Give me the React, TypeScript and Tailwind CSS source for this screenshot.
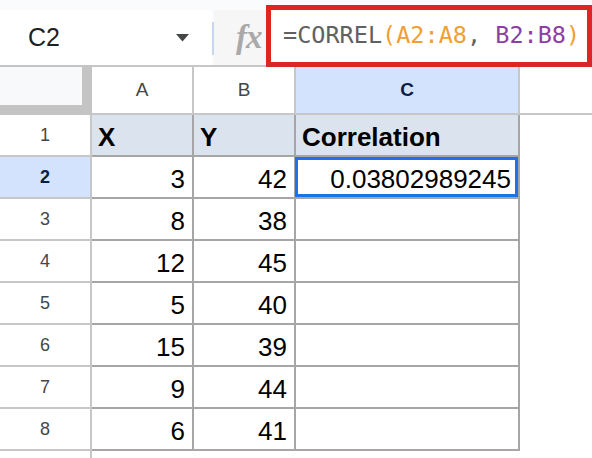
import React from "react";

type Row = { n: number; a?: string; b?: string; c?: string; head?: boolean; sel?: boolean };

const rows: Row[] = [
  { n: 1, a: "X", b: "Y", c: "Correlation", head: true },
  { n: 2, a: "3", b: "42", c: "0.03802989245", sel: true },
  { n: 3, a: "8", b: "38" },
  { n: 4, a: "12", b: "45" },
  { n: 5, a: "5", b: "40" },
  { n: 6, a: "15", b: "39" },
  { n: 7, a: "9", b: "44" },
  { n: 8, a: "6", b: "41" },
];

function ValueCell({ text, head, width, selected }: { text?: string; head?: boolean; width: string; selected?: boolean }) {
  return (
    <div
      className={`relative h-[42px] ${width} shrink-0 border-b-2 border-r-2 border-[#a6a6a6] flex items-end pb-[3px] text-[26px] leading-[30px] text-black ${
        head ? "bg-[#dbe4ee] font-bold justify-start pl-[6px]" : "bg-white justify-end pr-[7px]"
      }`}
    >
      <span>{text}</span>
      {selected && (
        <div className="absolute left-[-1px] top-0 right-0 bottom-0 border-[3px] border-[#1a73e8]" />
      )}
    </div>
  );
}

export default function App() {
  return (
    <div
      className="w-[592px] h-[458px] overflow-hidden bg-white"
      style={{ fontFamily: '"Liberation Sans", Arial, sans-serif' }}
    >
      {/* Formula bar */}
      <div className="flex h-[65px] bg-[#f9fbfd]">
        <div className="mt-[10px] h-[55px] w-[212px] shrink-0 bg-white flex items-center justify-between pl-[28px] pr-[23px]">
          <span className="text-[25px] text-[#1f1f1f] leading-none">C2</span>
          <svg width="13" height="8" viewBox="0 0 13 8" className="mt-[1px]">
            <polygon points="0,0 13,0 6.5,7.5" fill="#444746" />
          </svg>
        </div>
        <div className="mt-[22px] h-[33px] w-[2px] shrink-0 bg-[#c6d6ee]" />
        <div className="mt-[10px] h-[55px] w-[52px] shrink-0 bg-[#f6f6f6] flex items-center pl-[22px]">
          <span
            className="text-[33px] italic font-bold text-[#a9a9a9] leading-none tracking-[-1px]"
            style={{ fontFamily: '"Liberation Serif", serif' }}
          >
            fx
          </span>
        </div>
        <div className="relative z-10 mt-[5px] h-[62px] flex-1 border-[5px] border-[#dc2626] bg-white flex items-center pl-[12px]">
          <span
            className="text-[23.5px] whitespace-pre leading-none text-[#616161]"
            style={{ fontFamily: '"DejaVu Sans Mono", "Liberation Mono", monospace' }}
          >
            =CORREL<span className="text-[#f0a030]">(A2:A8</span>, <span className="text-[#8e3ea6]">B2:B8</span>
            <span className="text-[#f0a030]">)</span>
          </span>
        </div>
      </div>

      {/* Column headers */}
      <div className="flex h-[50px]">
        <div className="w-[92px] h-[50px] shrink-0 bg-[#c4c4c4] pt-[2px]">
          <div className="w-[82px] h-[38px] bg-[#f8f9fa]" />
        </div>
        <div className="w-[102px] shrink-0 border-t-2 border-b-2 border-r-2 border-[#c7c7c7] flex items-center justify-center text-[19px] text-[#444746]">
          A
        </div>
        <div className="w-[102px] shrink-0 border-t-2 border-b-2 border-r-2 border-[#c7c7c7] flex items-center justify-center text-[19px] text-[#444746]">
          B
        </div>
        <div className="w-[224px] shrink-0 border-t-2 border-b-2 border-r-2 border-[#c7c7c7] bg-[#d3e3fd] flex items-center justify-center text-[19px] font-bold text-[#0b1d47]">
          C
        </div>
        <div className="flex-1 border-t-2 border-b-2 border-[#c7c7c7]" />
      </div>

      {/* Rows */}
      {rows.map((r) => (
        <div key={r.n} className="flex h-[42px]">
          <div
            className={`w-[92px] h-[42px] shrink-0 border-r-2 border-b-2 border-[#c7c7c7] flex items-center justify-center text-[18px] ${
              r.sel ? "bg-[#d3e3fd] font-bold text-[#0b1d47]" : "bg-white text-[#444746]"
            }`}
          >
            {r.n}
          </div>
          <ValueCell text={r.a} head={r.head} width="w-[102px]" />
          <ValueCell text={r.b} head={r.head} width="w-[102px]" />
          <ValueCell text={r.c} head={r.head} width="w-[224px]" selected={r.sel} />
          <div className="flex-1" />
        </div>
      ))}
      <div className="flex h-[10px]">
        <div className="w-[92px] shrink-0 border-r-2 border-[#c7c7c7]" />
      </div>
    </div>
  );
}
